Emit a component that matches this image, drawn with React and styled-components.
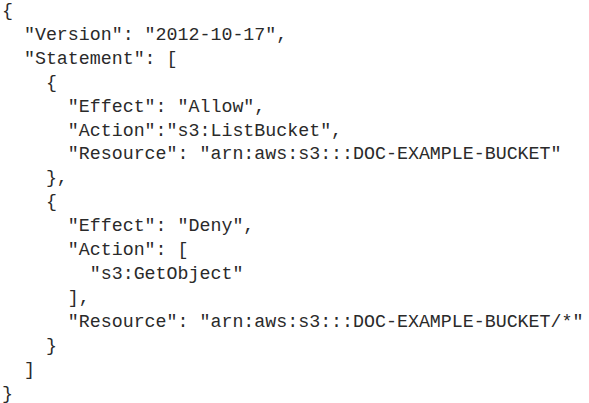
import React from 'react'
import styled, { createGlobalStyle } from 'styled-components'

const policy = `{
  "Version": "2012-10-17",
  "Statement": [
    {
      "Effect": "Allow",
      "Action":"s3:ListBucket",
      "Resource": "arn:aws:s3:::DOC-EXAMPLE-BUCKET"
    },
    {
      "Effect": "Deny",
      "Action": [
        "s3:GetObject"
      ],
      "Resource": "arn:aws:s3:::DOC-EXAMPLE-BUCKET/*"
    }
  ]
}`

const GlobalStyle = createGlobalStyle`
  html, body {
    margin: 0;
    padding: 0;
    background: #fff;
  }
`

export default function App() {
  return (
    <Page>
      <GlobalStyle />
      <Code>{policy}</Code>
    </Page>
  )
}

const Page = styled.div`
  width: 589px;
  height: 403px;
  background: #fff;
  overflow: hidden;
`

const Code = styled.pre`
  margin: 0;
  padding: 0 0 0 2px;
  font-family: "Courier New", "Nimbus Mono PS", "FreeMono", "Liberation Mono", monospace;
  font-size: 18.3px;
  line-height: 23.9px;
  color: #2a2a2a;
  white-space: pre;
`
